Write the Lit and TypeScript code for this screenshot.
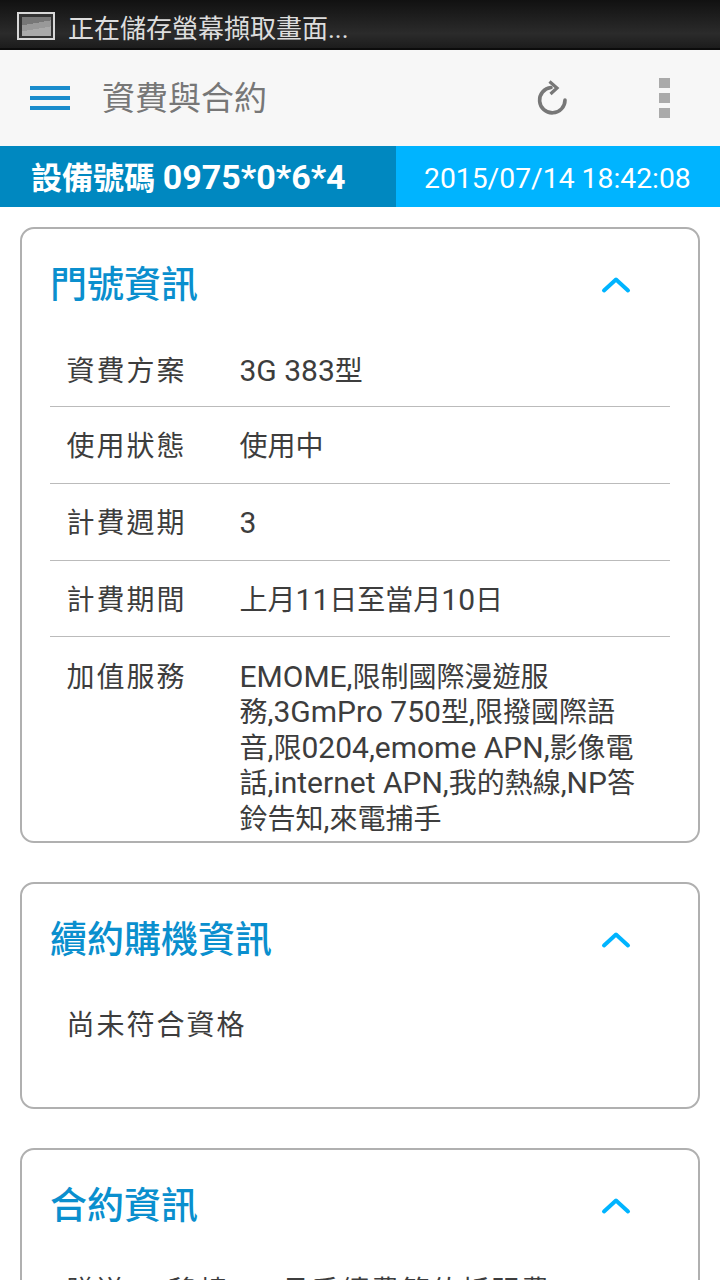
import { LitElement, html, css, svg, unsafeCSS } from "lit";
import { customElement } from "lit/decorators.js";

const FONT = unsafeCSS(`Roboto, "Noto Sans CJK TC", sans-serif`);

const chevron = html`<svg class="chev" width="30" height="18" viewBox="0 0 30 18"><path d="M3 14.5 15 3.5 27 14.5" fill="none" stroke="#00b4ff" stroke-width="4" stroke-linecap="round" stroke-linejoin="round"/></svg>`;

@customElement("app-root")
export class AppRoot extends LitElement {
  static styles = css`
    :host { display: block; width: 720px; height: 1280px; overflow: hidden; background: #fff; font-family: ${FONT}; color: #3d3d3d; }
    .status { height: 48px; padding: 4px 0 0 17px; box-sizing: border-box; background: linear-gradient(#111, #2b2b2b 70%, #1c1c1c); display: flex; align-items: center; gap: 13px; color: #ddd; font-size: 26px; white-space: nowrap; }
    .strip { height: 2px; background: #0c0c0c; }
    .thumb { width: 38px; height: 28px; box-sizing: border-box; border: 2.5px solid #d8d8d8; background: #333; padding: 2.5px; flex: none; }
    .thumb div { height: 100%; background: linear-gradient(170deg, #777 0 35%, #999 35% 60%, #aaa 60%); }
    .toolbar { height: 96px; background: #f7f7f7; display: flex; align-items: center; color: #777; }
    .menu { width: 40px; margin-left: 30px; display: flex; flex-direction: column; gap: 6px; }
    .menu i { height: 4px; background: #1a8ccc; display: block; }
    .title { margin: 0 0 4px 32px; font-size: 33px; flex: 1; }
    .refresh { margin-right: 92px; display: block; }
    .dots { margin-right: 50px; display: flex; flex-direction: column; gap: 5px; }
    .dots i { width: 11px; height: 10px; background: #aaa; display: block; }
    .device { height: 61px; display: flex; color: #fff; }
    .num { width: 396px; background: #0088c0; font-size: 31px; font-weight: 700; padding: 0 0 2px 31px; box-sizing: border-box; display: flex; align-items: center; white-space: pre; }
    .num span { font-size: 34px; line-height: 1; padding-top: 2px; }
    .time { flex: 1; background: #00b4ff; font-size: 28.3px; display: flex; align-items: center; padding: 3px 0 0 28px; white-space: nowrap; }
    .cards { display: flex; flex-direction: column; gap: 39px; padding: 20px 20px 0; }
    .card { border: 2px solid #b0b0b0; border-radius: 14px; padding: 0 28px; }
    .short { height: 227px; box-sizing: border-box; }
    .head { display: flex; align-items: center; justify-content: space-between; height: 112px; }
    .head h2 { margin: 0 0 6px; font-size: 37px; font-weight: 500; color: #0a8fce; }
    .chev { margin-right: 39px; display: block; }
    .row { display: flex; border-bottom: 1px solid #bbb; font-size: 28px; line-height: 36px; padding: 0 0 0 16.5px; align-items: flex-start; }
    .row .k { width: 173px; flex: none; letter-spacing: 2px; }
    .row .v { flex: 1; white-space: nowrap; }
    .l { font-size: 30px; line-height: 1; }
    .r1 { height: 66px; padding-top: 13px; box-sizing: border-box; }
    .r { height: 77px; padding-top: 22px; box-sizing: border-box; }
    .r.t { height: 76px; }
    .last { border-bottom: 0; padding-top: 23px; padding-bottom: 4px; line-height: 35.4px; }
    .plain { font-size: 28px; line-height: 36px; padding: 12px 0 0 16.5px; letter-spacing: 2px; white-space: nowrap; }
  `;

  render() {
    return html`
      <div class="status"><div class="thumb"><div></div></div><span>正在儲存螢幕擷取畫面...</span></div>
      <div class="strip"></div>
      <div class="toolbar">
        <div class="menu"><i></i><i></i><i></i></div>
        <div class="title">資費與合約</div>
        <svg class="refresh" width="30" height="36" viewBox="0 0 30 36">${svg`<path d="M14 7.5A12.7 12.7 0 1 0 28 20" fill="none" stroke="#777" stroke-width="3.6" stroke-linecap="round"/><path d="M12.5 1.5 20 8l-6.5 6" fill="none" stroke="#777" stroke-width="3.2"/>`}</svg>
        <div class="dots"><i></i><i></i><i></i></div>
      </div>
      <div class="device">
        <div class="num">設備號碼 <span>0975*0*6*4</span></div>
        <div class="time">2015/07/14 18:42:08</div>
      </div>
      <div class="cards">
        <section class="card">
          <div class="head"><h2>門號資訊</h2>${chevron}</div>
          <div class="row r1"><div class="k">資費方案</div><div class="v"><span class="l">3G 383</span>型</div></div>
          <div class="row r"><div class="k">使用狀態</div><div class="v">使用中</div></div>
          <div class="row r"><div class="k">計費週期</div><div class="v"><span class="l">3</span></div></div>
          <div class="row r t"><div class="k">計費期間</div><div class="v">上月<span class="l">11</span>日至當月<span class="l">10</span>日</div></div>
          <div class="row last"><div class="k">加值服務</div><div class="v"><span class="l">EMOME,</span>限制國際漫遊服<br>務<span class="l">,3GmPro 750</span>型<span class="l">,</span>限撥國際語<br>音<span class="l">,</span>限<span class="l">0204,emome APN,</span>影像電<br>話<span class="l">,internet APN,</span>我的熱線<span class="l">,NP</span>答<br>鈴告知<span class="l">,</span>來電捕手</div></div>
        </section>
        <section class="card short">
          <div class="head"><h2>續約購機資訊</h2>${chevron}</div>
          <div class="plain">尚未符合資格</div>
        </section>
        <section class="card">
          <div class="head"><h2>合約資訊</h2>${chevron}</div>
          <div class="plain">贈送HP移轉240月手續費等值折明費</div>
        </section>
      </div>
    `;
  }
}
